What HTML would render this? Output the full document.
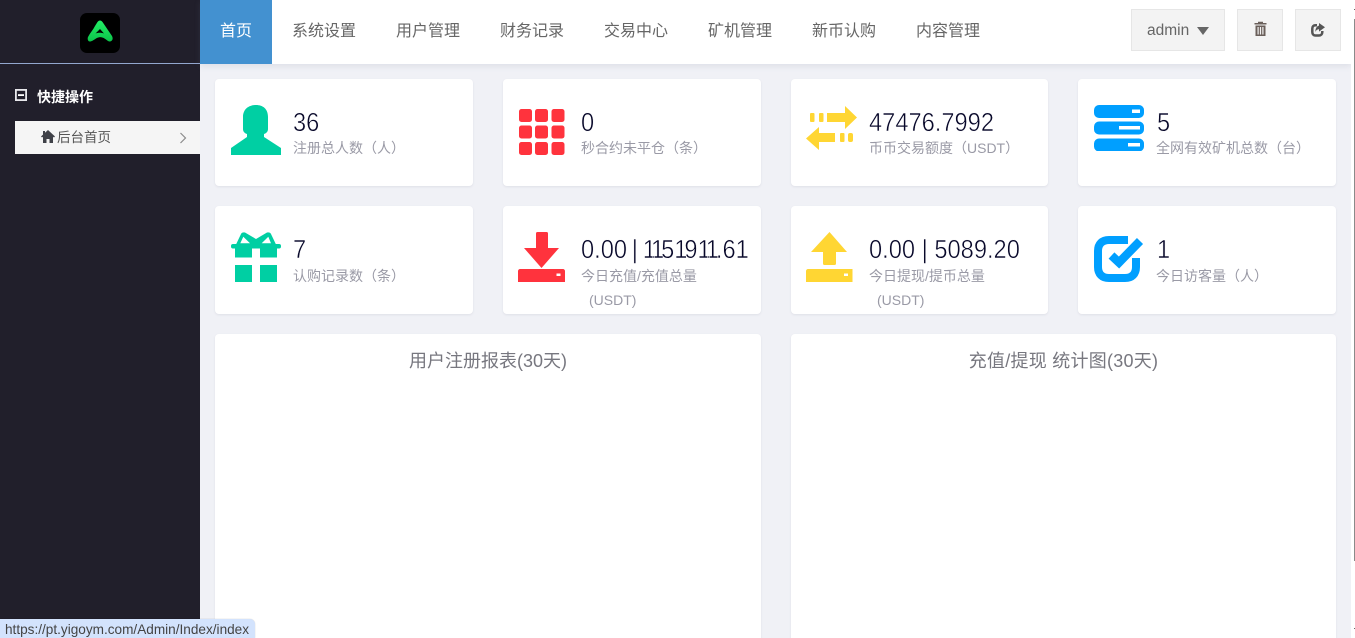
<!DOCTYPE html>
<html lang="zh-CN"><head><meta charset="utf-8"><title>后台首页</title>
<style>
html,body{margin:0;padding:0;width:1355px;height:638px;overflow:hidden;background:#fff}
body{position:relative;font-family:"Liberation Sans","Noto Sans CJK SC",sans-serif;color:#666}
.a{position:absolute;white-space:nowrap}
#side{left:0;top:0;width:200px;height:638px;background:#211f2b}
#main{left:200px;top:64px;width:1151px;height:574px;background:#f0f1f6}
#top{left:200px;top:0;width:1151px;height:64px;background:#fff;box-shadow:0 2px 6px rgba(120,125,150,.16)}
.nav{top:21px;font-size:16px;line-height:22px;color:#666}
.btn{background:#f3f3f3;border:1px solid #e6e6e6;box-sizing:border-box;top:9px;height:42px}
.card{background:#fff;border-radius:4px;box-shadow:0 1px 2px rgba(120,125,150,.14)}
.num{font-size:26px;line-height:30px;color:#08082a;-webkit-text-stroke:.5px #fff;transform:scaleX(.91);transform-origin:0 0}
.num i{font-style:normal;letter-spacing:-3.400px}
.lab{font-size:14px;line-height:20px;color:#9a9aa6}
.lab b{font-weight:400}
.lab u{text-decoration:none}
svg{position:absolute;display:block}
.title{font-size:18px;line-height:24px;color:#77777f;text-align:center}
</style></head><body>
<div class="a" id="side"></div>
<div class="a" style="left:0;top:63px;width:200px;height:1px;background:#93a7cf"></div>
<svg style="left:80px;top:13px" width="40" height="40" viewBox="0 0 40 40"><defs><linearGradient id="g" x1="0" y1="0" x2="0" y2="1"><stop offset="0" stop-color="#22ee66"/><stop offset="1" stop-color="#0cc34a"/></linearGradient></defs><rect width="40" height="40" rx="7" fill="#000"/><path d="M8 24C10 20 13 17 15 13L17.500 9C19 7 21 7 22.500 9L32 23C34 27 31 29.500 28 28C24 25 21 22.500 16 25.500C13 27.500 10 29.500 8.500 28C7.500 27 7.500 25 8 24Z" fill="url(#g)"/><path d="M15.500 20.500L20 16L24 20.500C21 19.500 18.500 19.500 15.500 20.500Z" fill="#000"/></svg>
<svg style="left:15px;top:89px" width="12" height="12" viewBox="0 0 12 12"><rect x=".9" y=".9" width="10.200" height="10.200" fill="none" stroke="#e8e8ec" stroke-width="1.800"/><rect x="3" y="5.200" width="6" height="1.800" fill="#fff"/></svg>
<div class="a" style="left:37px;top:88px;font-size:14px;line-height:18px;font-weight:700;color:#fff">快捷操作</div>
<div class="a" style="left:15px;top:121px;width:185px;height:33px;background:#f5f5f5"></div>
<svg style="left:41px;top:130px" width="14" height="13" viewBox="0 0 14 13"><path d="M7 0L14 6.500L13 7.500L12 6.700V13H8.500V9H5.500V13H2V6.700L1 7.500L0 6.500L2 4.600V1H4V2.800Z" fill="#3f4148"/></svg>
<div class="a" style="left:57px;top:129px;font-size:13.500px;line-height:18px;color:#555">后台首页</div>
<svg style="left:179px;top:132px" width="9" height="12" viewBox="0 0 9 12"><path d="M1.500 1L6.500 6L1.500 11" fill="none" stroke="#8a8a8a" stroke-width="1.200"/></svg>

<div class="a" id="main"></div>
<div class="a" id="top"></div>
<div class="a" style="left:200px;top:0;width:72px;height:64px;background:#4391d0"></div>
<div class="a nav" style="left:220px;color:#fff">首页</div>
<div class="a nav" style="left:292px">系统设置</div>
<div class="a nav" style="left:396px">用户管理</div>
<div class="a nav" style="left:500px">财务记录</div>
<div class="a nav" style="left:604px">交易中心</div>
<div class="a nav" style="left:708px">矿机管理</div>
<div class="a nav" style="left:812px">新币认购</div>
<div class="a nav" style="left:916px">内容管理</div>

<div class="a btn" style="left:1131px;width:94px"></div>
<div class="a" style="left:1147px;top:22px;font-size:15.500px;line-height:18px;color:#666">admin</div>
<svg style="left:1197px;top:27px" width="12" height="8" viewBox="0 0 12 8"><path d="M0 0H12L6 8Z" fill="#666"/></svg>
<div class="a btn" style="left:1237px;width:46px"></div>
<svg style="left:1254px;top:21px" width="13" height="15" viewBox="0 0 13 15"><path d="M4 2V.7H9V2H12.500V3.500H.5V2Z" fill="#6a5f5a"/><path d="M1.500 4.500H11.500V15H1.500ZM3.500 6V13.500H4.700V6ZM5.900 6V13.500H7.100V6ZM8.300 6V13.500H9.500V6Z" fill="#6a5f5a" fill-rule="evenodd"/></svg>
<div class="a btn" style="left:1295px;width:46px"></div>
<svg style="left:1311px;top:23px" width="14" height="14" viewBox="0 0 14 14"><path d="M6 2.300H4.500C2.500 2.300 1.300 3.500 1.300 5.500V9C1.300 11 2.500 12.500 4.500 12.500H8C10 12.500 11.300 11 11.300 9V8" fill="none" stroke="#555" stroke-width="2.500"/><path d="M8 0L14 4.300L8 8.600V6.300C6.500 6.300 5.200 7 4.500 9C4 5.500 6 3 8 2.600Z" fill="#555"/></svg>

<div class="a card" style="left:215px;top:79px;width:258px;height:107px"></div>
<div class="a card" style="left:503px;top:79px;width:258px;height:107px"></div>
<div class="a card" style="left:791px;top:79px;width:257px;height:107px"></div>
<div class="a card" style="left:1078px;top:79px;width:258px;height:107px"></div>
<div class="a card" style="left:215px;top:206px;width:258px;height:108px"></div>
<div class="a card" style="left:503px;top:206px;width:258px;height:108px"></div>
<div class="a card" style="left:791px;top:206px;width:257px;height:108px"></div>
<div class="a card" style="left:1078px;top:206px;width:258px;height:108px"></div>
<div class="a card" style="left:215px;top:334px;width:546px;height:320px"></div>
<div class="a card" style="left:791px;top:334px;width:545px;height:320px"></div>

<!-- person -->
<svg style="left:231px;top:105px" width="50" height="50" viewBox="0 0 50 50"><path d="M12 12C12 4 18 0 25 0C32 0 37 4 37 12V24C37 26 36 28 33 29V32L50 43V50H0V43L16 32V29C13 28 12 26 12 24Z" fill="#00cfa3"/></svg>
<!-- grid -->
<svg style="left:518px;top:109px" width="47" height="46" viewBox="0 0 47 46" fill="#ff333d"><rect x="1" width="13" height="13" rx="2.500"/><rect x="17" width="13" height="13" rx="2.500"/><rect x="33.500" width="13" height="13" rx="2.500"/><rect x="1" y="16.500" width="13" height="13" rx="2.500"/><rect x="17" y="16.500" width="13" height="13" rx="2.500"/><rect x="33.500" y="16.500" width="13" height="13" rx="2.500"/><rect x="1" y="33" width="13" height="13" rx="2.500"/><rect x="17" y="33" width="13" height="13" rx="2.500"/><rect x="33.500" y="33" width="13" height="13" rx="2.500"/></svg>
<!-- exchange -->
<svg style="left:806px;top:105px" width="52" height="46" viewBox="0 0 52 46" fill="#ffd633"><rect x="4" y="8" width="4.500" height="9" rx="1"/><rect x="13" y="8" width="4.500" height="9" rx="1"/><path d="M21 8H39V1L51 12.500L39 24V17H21Z"/><path d="M29 28H13V22L0 33.500L13 45V37H29Z"/><rect x="34" y="28" width="4.500" height="9" rx="1"/><rect x="42" y="28" width="5" height="9" rx="2"/></svg>
<!-- servers -->
<svg style="left:1094px;top:105px" width="50" height="46" viewBox="0 0 50 46"><g fill="#009fff"><rect width="50" height="13" rx="5"/><rect y="16.500" width="50" height="13" rx="5"/><rect y="33.500" width="50" height="13" rx="5"/></g><g fill="#fff"><rect x="38" y="4.500" width="8" height="3.500"/><rect x="25" y="21" width="21" height="3.500"/><rect x="34" y="38" width="12" height="3.500"/></g></svg>
<!-- gift -->
<svg style="left:231px;top:232px" width="50" height="50" viewBox="0 0 50 50" fill="#00cfa3"><rect x="4" y="33" width="17" height="17"/><rect x="29" y="33" width="17" height="17"/><path d="M4 16H21V25.500H4ZM29 16H46V25.500H29Z"/><rect y="12" width="50" height="4.500" rx="2"/><path fill-rule="evenodd" d="M5 12.500L10 2Q11 0 14 .5L25 7L36 .5Q39 0 40 2L45 12.500ZM12.300 4.700L9.300 11.300H19ZM37.300 4.700L30.700 11.300H40Z"/></svg>
<!-- download -->
<svg style="left:518px;top:232px" width="47" height="50" viewBox="0 0 47 50" fill="#ff333d"><path d="M18 1.500C18 .5 18.500 0 19.500 0H28.500C29.500 0 30 .5 30 1.500V16H41L23.500 36L6 16H18Z"/><path d="M2 37H45C46 37 47 38 47 39V50H0V39C0 38 1 37 2 37Z"/><rect x="38.500" y="41.500" width="4" height="2.500" fill="#fff"/></svg>
<!-- upload -->
<svg style="left:806px;top:232px" width="47" height="50" viewBox="0 0 47 50" fill="#ffd633"><path d="M23.500 0L41 20H30V31.500C30 32.500 29.500 33 28.500 33H18.500C17.500 33 17 32.500 17 31.500V20H5Z"/><path d="M2 37H46.500V50H0V39C0 38 1 37 2 37Z"/><rect x="38" y="41.500" width="4" height="2.500" fill="#fff"/></svg>
<!-- check -->
<svg style="left:1094px;top:236px" width="50" height="46" viewBox="0 0 50 46" fill="none"><path d="M34 4H15C8 4 4 8 4 15V31C4 38 8 42 15 42H31C38 42 42 38 42 31V22" stroke="#009fff" stroke-width="8"/><path d="M17.500 19.500L25 26.500L46 5" stroke="#009fff" stroke-width="8.500"/></svg>

<div class="a num" style="left:293px;top:107px">36</div>
<div class="a lab" style="left:293px;top:138px">注册总人数<b>（</b>人<u>）</u></div>
<div class="a num" style="left:581px;top:107px">0</div>
<div class="a lab" style="left:581px;top:138px">秒合约未平仓<b>（</b>条<u>）</u></div>
<div class="a num" style="left:869px;top:107px">47476.7992</div>
<div class="a lab" style="left:869px;top:138px">币币交易额度<b>（</b>USDT<u>）</u></div>
<div class="a num" style="left:1157px;top:107px">5</div>
<div class="a lab" style="left:1156px;top:138px">全网有效矿机总数<b>（</b>台<u>）</u></div>
<div class="a num" style="left:293px;top:234px">7</div>
<div class="a lab" style="left:293px;top:266px">认购记录数<b>（</b>条<u>）</u></div>
<div class="a num" style="left:581px;top:234px;word-spacing:-2px">0.00 | <i>11</i>5<i>1</i>9<i>11</i>.61</div>
<div class="a lab" style="left:581px;top:266px">今日充值/充值总量</div>
<div class="a lab" style="left:589px;top:290px">(USDT)</div>
<div class="a num" style="left:869px;top:234px">0.00 | 5089.20</div>
<div class="a lab" style="left:869px;top:266px">今日提现/提币总量</div>
<div class="a lab" style="left:877px;top:290px">(USDT)</div>
<div class="a num" style="left:1157px;top:234px">1</div>
<div class="a lab" style="left:1156px;top:266px">今日访客量<b>（</b>人<u>）</u></div>

<div class="a title" style="left:215px;top:349px;width:546px">用户注册报表(30天)</div>
<div class="a title" style="left:791px;top:349px;width:545px;letter-spacing:.25px">充值/提现 统计图(30天)</div>

<div class="a" style="left:1351px;top:0;width:4px;height:638px;background:#fff"></div>
<div class="a" style="left:1354px;top:19px;width:1px;height:542px;background:#8a8a8a"></div>
<div class="a" style="left:1354px;top:9px;width:1px;height:1px;background:#666"></div>
<div class="a" style="left:1354px;top:628px;width:1px;height:1px;background:#666"></div>

<div class="a" style="left:0;top:619px;width:255px;height:19px;background:#d3e3fd;border-top-right-radius:5px;box-shadow:0 0 1px rgba(0,0,0,.25)"></div>
<div class="a" style="left:5px;top:621px;font-size:13.600px;line-height:17px;color:#444">https://pt.yigoym.com/Admin/Index/index</div>
</body></html>
